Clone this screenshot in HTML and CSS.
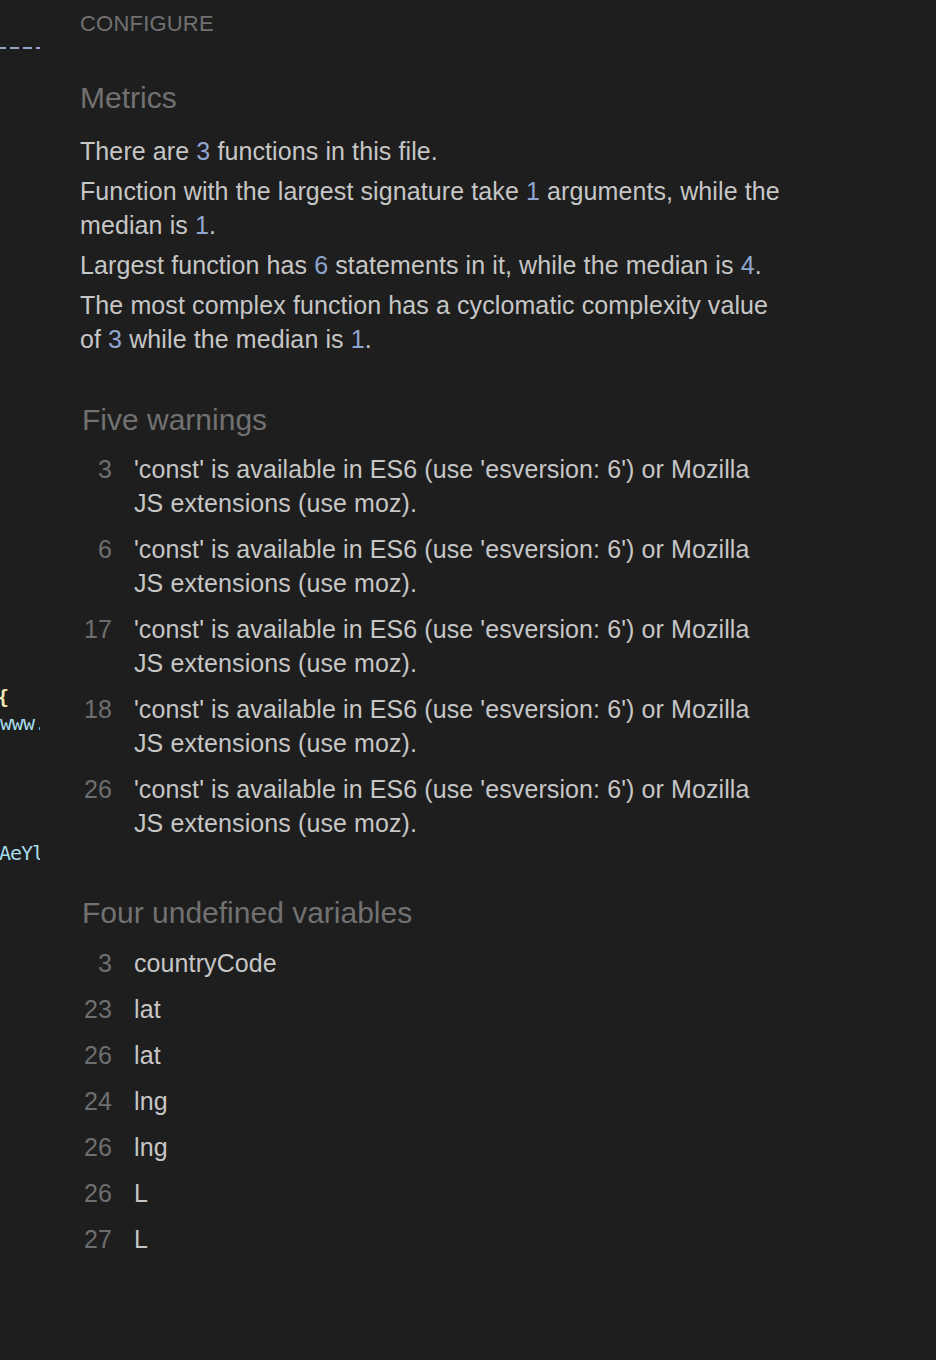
FILE: index.html
```html
<!DOCTYPE html>
<html>
<head>
<meta charset="utf-8">
<link rel="stylesheet" href="styles.css">
</head>
<body>
<div class="page">
  <div class="gutter">
    <div class="dash"></div>
    <div class="code brace">{</div>
    <div class="code url">www.googleapis.com</div>
    <div class="code key">AeYlza</div>
  </div>
  <div class="main">
    <div class="configure">CONFIGURE</div>
    <h2 class="heading metrics">Metrics</h2>
    <p class="para">There are <span class="num">3</span> functions in this file.</p>
    <p class="para">Function with the largest signature take <span class="num">1</span> arguments, while the median is <span class="num">1</span>.</p>
    <p class="para">Largest function has <span class="num">6</span> statements in it, while the median is <span class="num">4</span>.</p>
    <p class="para">The most complex function has a cyclomatic complexity value of <span class="num">3</span> while the median is <span class="num">1</span>.</p>

    <h2 class="heading section warn-head">Five warnings</h2>
    <div class="list warnings">
      <div class="row"><span class="ln">3</span><span class="msg">'const' is available in ES6 (use 'esversion: 6') or Mozilla JS extensions (use moz).</span></div>
      <div class="row"><span class="ln">6</span><span class="msg">'const' is available in ES6 (use 'esversion: 6') or Mozilla JS extensions (use moz).</span></div>
      <div class="row"><span class="ln">17</span><span class="msg">'const' is available in ES6 (use 'esversion: 6') or Mozilla JS extensions (use moz).</span></div>
      <div class="row"><span class="ln">18</span><span class="msg">'const' is available in ES6 (use 'esversion: 6') or Mozilla JS extensions (use moz).</span></div>
      <div class="row"><span class="ln">26</span><span class="msg">'const' is available in ES6 (use 'esversion: 6') or Mozilla JS extensions (use moz).</span></div>
    </div>

    <h2 class="heading section undef-head">Four undefined variables</h2>
    <div class="list vars">
      <div class="row"><span class="ln">3</span><span class="msg">countryCode</span></div>
      <div class="row"><span class="ln">23</span><span class="msg">lat</span></div>
      <div class="row"><span class="ln">26</span><span class="msg">lat</span></div>
      <div class="row"><span class="ln">24</span><span class="msg">lng</span></div>
      <div class="row"><span class="ln">26</span><span class="msg">lng</span></div>
      <div class="row"><span class="ln">26</span><span class="msg">L</span></div>
      <div class="row"><span class="ln">27</span><span class="msg">L</span></div>
    </div>
  </div>
</div>
</body>
</html>
```

FILE: styles.css
```css
html, body {
  margin: 0;
  padding: 0;
  background: #1e1e1e;
}

.page {
  display: flex;
  min-height: 1360px;
  background: #1e1e1e;
  font-family: "Liberation Sans", Arial, sans-serif;
}

.gutter {
  flex: none;
  width: 40px;
  overflow: hidden;
  display: flex;
  flex-direction: column;
}

.dash {
  margin-top: 47px;
  width: 40px;
  height: 2px;
  background: repeating-linear-gradient(90deg, #93a5cc 0 9px, transparent 9px 13px);
  background-position: -3px 0;
}

.code {
  font-family: "DejaVu Sans Mono", monospace;
  font-size: 20px;
  line-height: 24px;
  white-space: nowrap;
}

.brace {
  margin-top: 636px;
  margin-left: -3px;
  color: #efe6b4;
  font-weight: bold;
}

.url {
  margin-top: 2px;
  color: #a8dcea;
  letter-spacing: -0.5px;
}

.key {
  margin-top: 106px;
  margin-left: -1px;
  color: #a8dcea;
  letter-spacing: -1px;
}

.main {
  flex: none;
  width: 702px;
  padding-left: 40px;
}

.configure {
  margin-top: 10px;
  font-size: 22px;
  line-height: 28px;
  color: #717171;
  letter-spacing: 0.2px;
}

.heading {
  margin: 0;
  font-weight: normal;
  font-size: 30px;
  line-height: 36px;
  color: #717171;
}

.metrics {
  margin-top: 42px;
  margin-bottom: 18px;
}

.para {
  margin: 0 0 6px;
  font-size: 25px;
  line-height: 34px;
  letter-spacing: 0.1px;
  color: #c6c6c6;
}

.num {
  color: #8fa5cf;
}

.section {
  padding-left: 2px;
}

.warn-head {
  margin-top: 46px;
  margin-bottom: 14px;
}

.undef-head {
  margin-top: 55px;
  margin-bottom: 15px;
}

.list {
  display: flex;
  flex-direction: column;
  gap: 12px;
  padding-left: 2px;
}

.row {
  display: flex;
  gap: 22px;
  font-size: 25px;
  line-height: 34px;
  letter-spacing: 0.1px;
}

.ln {
  flex: none;
  width: 30px;
  text-align: right;
  color: #6e6e6e;
}

.msg {
  color: #c6c6c6;
}
```
